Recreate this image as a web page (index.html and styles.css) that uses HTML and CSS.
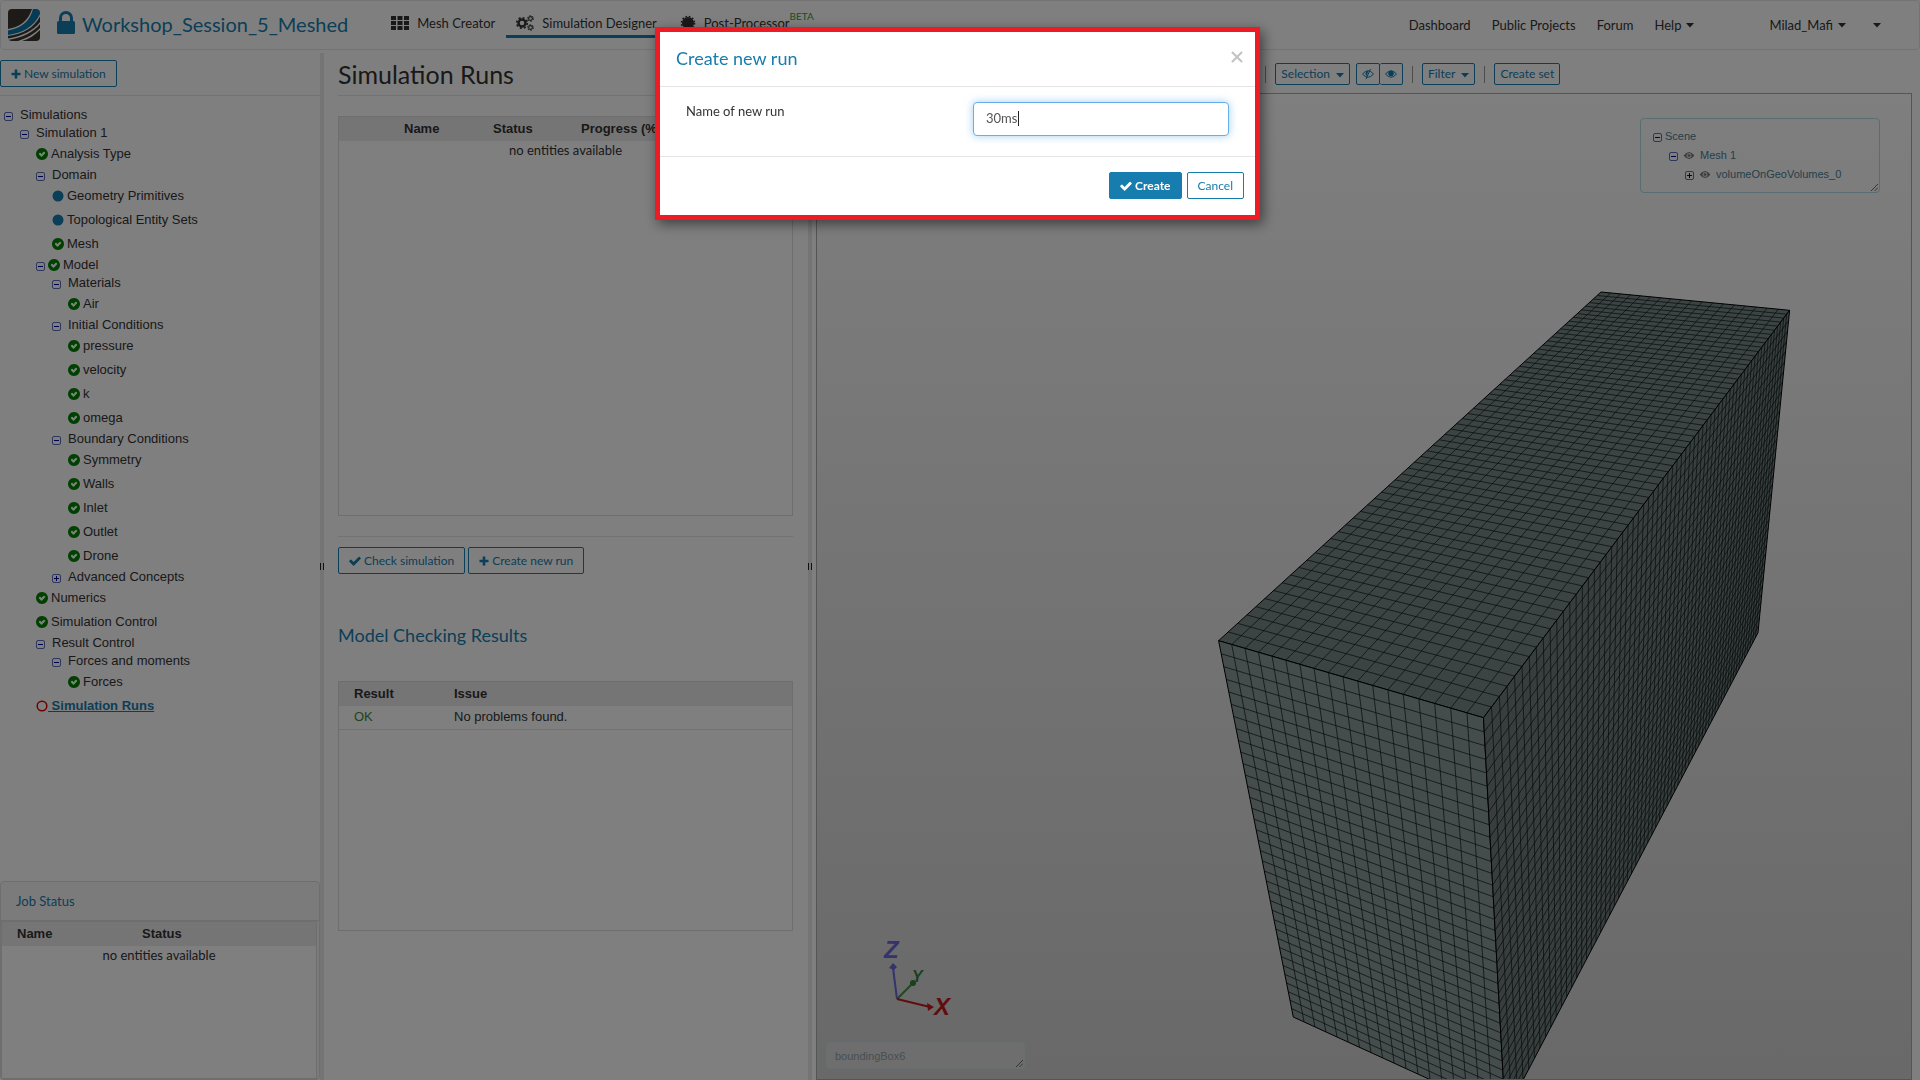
FILE: index.html
```html
<!DOCTYPE html>
<html lang="en">
<head>
<meta charset="utf-8">
<meta name="viewport" content="width=device-width, initial-scale=1">
<title>Workshop_Session_5_Meshed</title>
<link rel="stylesheet" href="styles.css">
</head>
<body>
<svg class="defs" aria-hidden="true">
  <symbol id="ok" viewBox="128 128 1536 1536"><path d="M1299 813l-422 422q-19 19-45 19t-45-19l-294-294q-19-19-19-45t19-45l102-102q19-19 45-19t45 19l147 147 275-275q19-19 45-19t45 19l102 102q19 19 19 45t-19 45zm365 83q0-209-103-385.500t-279.500-279.500-385.500-103-385.500 103-279.500 279.500-103 385.500 103 385.500 279.500 279.500 385.500 103 385.500-103 279.500-279.500 103-385.500z"/></symbol>
  <symbol id="check" viewBox="100 100 1600 1600"><path d="M1671 566q0 40-28 68l-724 724-136 136q-28 28-68 28t-68-28l-136-136-362-362q-28-28-28-68t28-68l136-136q28-28 68-28t68 28l294 295 656-657q28-28 68-28t68 28l136 136q28 28 28 68z"/></symbol>
  <symbol id="plus" viewBox="0 0 10 10"><path d="M3.700 0.500h2.600v3.200h3.200v2.600h-3.200v3.200h-2.600v-3.200h-3.200v-2.600h3.200z"/></symbol>
  <symbol id="minus-box" viewBox="0 0 9 9"><rect x=".5" y=".5" width="8" height="8" rx="1.500" fill="#fff" fill-opacity=".3" stroke="#5c6fae"/><path d="M2 4.500h5" stroke="#00009c"/></symbol>
  <symbol id="plus-box" viewBox="0 0 9 9"><rect x=".5" y=".5" width="8" height="8" rx="1.500" fill="#fff" fill-opacity=".3" stroke="#5c6fae"/><path d="M2 4.500h5M4.500 2v5" stroke="#00009c"/></symbol>
  <symbol id="dot" viewBox="0 0 12 12"><circle cx="6" cy="6" r="5.500"/></symbol>
  <symbol id="ring" viewBox="0 0 12 12"><circle cx="6" cy="6" r="4.800" fill="none" stroke="currentColor" stroke-width="1.500"/></symbol>
  <symbol id="eye" viewBox="0 0 12 10"><path d="M.5 5Q6-1.500 11.500 5Q6 11.500.5 5z" fill="none" stroke="currentColor"/><circle cx="6" cy="4.500" r="2.800"/></symbol>
  <symbol id="eye-off" viewBox="0 0 12 10"><path d="M.5 5Q6-1.500 11.500 5Q6 11.500.5 5zM8.500 0L4 10" fill="none" stroke="currentColor"/><path d="M6.500 1.700L4.500 7A3 3 0 0 1 6.500 1.700z"/></symbol>
  <symbol id="scene-eye" viewBox="0 0 12 10"><path d="M0 5Q6-3 12 5Q6 13 0 5z"/><circle cx="6" cy="5" r="2.800" fill="#ddd"/><circle cx="6" cy="5" r="1.500"/></symbol>
  <symbol id="caret" viewBox="0 0 8 5"><path d="M0 0h8L4 4.500z"/></symbol>
  <symbol id="grip" viewBox="0 0 8 8"><path d="M0 8L8 0M4 8L8 4" stroke="#555" stroke-width="1"/></symbol>
</svg>

<header class="navbar">
  <a class="logo" href="#" aria-label="Home">
    <svg viewBox="0 0 32 32" width="32" height="32">
      <defs><clipPath id="tile"><rect width="32" height="32" rx="4"/></clipPath></defs>
      <g clip-path="url(#tile)">
        <rect width="32" height="32" fill="#fff"/>
        <path d="M0 0H24C20 12 12 18 0 20z" fill="#3a352f"/>
        <path d="M25 0H32V5C26 18 14 24 0 26V21.500C14 19 22 12 25 0z" fill="#0a77a9"/>
        <path d="M32 7.500V13C25 22 14 27 0 29.500V27C15 25 26 19 32 7.500z" fill="#3a352f"/>
        <path d="M32 15V19C26 25 19 29 10 32H0V31C14 29 26 23 32 15z" fill="#3a352f"/>
        <path d="M32 21V32H14C21 30 27 26 32 21z" fill="#3a352f"/>
      </g>
    </svg>
  </a>
  <svg class="lock" viewBox="0 0 18 23" width="18" height="23"><path d="M3.500 11V7a5.500 5.500 0 0 1 11 0v4" fill="none" stroke="currentColor" stroke-width="3"/><rect y="10" width="18" height="13" rx="1.500" fill="currentColor"/></svg>
  <h1 class="project">Workshop_Session_5_Meshed</h1>
  <nav class="tabs" aria-label="Workspace">
    <a class="tab" href="#">
      <svg viewBox="0 0 18 14" width="18" height="14"><path d="M0 0h5v4H0zM6.500 0h5v4h-5zM13 0h5v4h-5zM0 5h5v4H0zM6.500 5h5v4h-5zM13 5h5v4h-5zM0 10h5v4H0zM6.500 10h5v4h-5zM13 10h5v4h-5z"/></svg>
      Mesh Creator</a>
    <a class="tab active" href="#">
      <svg viewBox="0 0 18 16" width="18" height="16" fill="none" stroke="currentColor">
        <g fill="none">
          <circle cx="6" cy="8" r="3.500" stroke-width="2.400"/><circle cx="6" cy="8" r="5.300" stroke-width="1.600" stroke-dasharray="2.080 2.080"/>
          <circle cx="14.500" cy="3.500" r="1.900" stroke-width="1.100"/><circle cx="14.500" cy="3.500" r="2.900" stroke-width="1" stroke-dasharray="1.520 1.520"/>
          <circle cx="14.500" cy="12.500" r="1.900" stroke-width="1.100"/><circle cx="14.500" cy="12.500" r="2.900" stroke-width="1" stroke-dasharray="1.520 1.520"/>
        </g>
      </svg>
      Simulation Designer</a>
    <a class="tab" href="#">
      <svg viewBox="0 0 16 16" width="16" height="16"><circle cx="8" cy="8" r="6"/><circle cx="8" cy="8" r="6.500" fill="none" stroke="currentColor" stroke-width="1.600" stroke-dasharray="1.700 1.700"/></svg>
      <span>Post-Processor<sup>BETA</sup></span></a>
  </nav>
  <nav class="account" aria-label="Account">
    <a href="#">Dashboard</a>
    <a href="#">Public Projects</a>
    <a href="#">Forum</a>
    <a href="#">Help <svg class="caret"><use href="#caret"/></svg></a>
    <a class="user" href="#">Milad_Mafi <svg class="caret"><use href="#caret"/></svg></a>
    <a class="more" href="#" aria-label="More"><svg class="caret"><use href="#caret"/></svg></a>
  </nav>
</header>

<main class="workspace">
  <aside class="sidebar">
    <div class="side-tools"><button class="btn" type="button"><svg class="plus"><use href="#plus"/></svg>New simulation</button></div>
    <ul class="tree">
      <li class="folder l0"><svg class="box"><use href="#minus-box"/></svg>Simulations</li>
      <li class="folder l1"><svg class="box"><use href="#minus-box"/></svg>Simulation 1</li>
      <li class="leaf l2"><svg class="ok"><use href="#ok"/></svg>Analysis Type</li>
      <li class="folder l2"><svg class="box"><use href="#minus-box"/></svg>Domain</li>
      <li class="leaf l3"><svg class="dot"><use href="#dot"/></svg>Geometry Primitives</li>
      <li class="leaf l3"><svg class="dot"><use href="#dot"/></svg>Topological Entity Sets</li>
      <li class="leaf l3"><svg class="ok"><use href="#ok"/></svg>Mesh</li>
      <li class="folder both l2"><svg class="box"><use href="#minus-box"/></svg><svg class="ok"><use href="#ok"/></svg>Model</li>
      <li class="folder l3"><svg class="box"><use href="#minus-box"/></svg>Materials</li>
      <li class="leaf l4"><svg class="ok"><use href="#ok"/></svg>Air</li>
      <li class="folder l3"><svg class="box"><use href="#minus-box"/></svg>Initial Conditions</li>
      <li class="leaf l4"><svg class="ok"><use href="#ok"/></svg>pressure</li>
      <li class="leaf l4"><svg class="ok"><use href="#ok"/></svg>velocity</li>
      <li class="leaf l4"><svg class="ok"><use href="#ok"/></svg>k</li>
      <li class="leaf l4"><svg class="ok"><use href="#ok"/></svg>omega</li>
      <li class="folder l3"><svg class="box"><use href="#minus-box"/></svg>Boundary Conditions</li>
      <li class="leaf l4"><svg class="ok"><use href="#ok"/></svg>Symmetry</li>
      <li class="leaf l4"><svg class="ok"><use href="#ok"/></svg>Walls</li>
      <li class="leaf l4"><svg class="ok"><use href="#ok"/></svg>Inlet</li>
      <li class="leaf l4"><svg class="ok"><use href="#ok"/></svg>Outlet</li>
      <li class="leaf l4"><svg class="ok"><use href="#ok"/></svg>Drone</li>
      <li class="folder l3"><svg class="box"><use href="#plus-box"/></svg>Advanced Concepts</li>
      <li class="leaf l2"><svg class="ok"><use href="#ok"/></svg>Numerics</li>
      <li class="leaf l2"><svg class="ok"><use href="#ok"/></svg>Simulation Control</li>
      <li class="folder l2"><svg class="box"><use href="#minus-box"/></svg>Result Control</li>
      <li class="folder l3"><svg class="box"><use href="#minus-box"/></svg>Forces and moments</li>
      <li class="leaf l4"><svg class="ok"><use href="#ok"/></svg>Forces</li>
      <li class="leaf l2"><svg class="ring"><use href="#ring"/></svg><a href="#">&nbsp;Simulation Runs</a></li>
    </ul>
    <section class="jobs">
      <h2>Job Status</h2>
      <div class="grid-box">
        <table>
          <thead><tr><th class="job-name">Name</th><th>Status</th></tr></thead>
          <tbody><tr><td class="empty" colspan="2">no entities available</td></tr></tbody>
        </table>
      </div>
    </section>
  </aside>

  <div class="splitter"><span></span></div>

  <section class="runs">
    <h2 class="page-title">Simulation Runs</h2>
    <div class="grid-box runs-box">
      <table>
        <thead><tr><th class="c-pick"></th><th class="c-name">Name</th><th class="c-status">Status</th><th>Progress (%)</th></tr></thead>
        <tbody><tr><td class="empty" colspan="4">no entities available</td></tr></tbody>
      </table>
    </div>
    <div class="actions">
      <button class="btn" type="button"><svg class="check"><use href="#check"/></svg>Check simulation</button>
      <button class="btn" type="button"><svg class="plus"><use href="#plus"/></svg>Create new run</button>
    </div>
    <h3 class="sub-title">Model Checking Results</h3>
    <div class="grid-box results-box">
      <table>
        <thead><tr><th class="c-result">Result</th><th>Issue</th></tr></thead>
        <tbody><tr class="ruled"><td class="c-result good">OK</td><td>No problems found.</td></tr></tbody>
      </table>
    </div>
  </section>

  <div class="splitter"><span></span></div>

  <section class="viewer">
    <div class="toolbar">
      <i class="sep"></i>
      <button class="btn small" type="button">Selection <svg class="caret"><use href="#caret"/></svg></button>
      <span class="pair">
        <button class="btn small" type="button" aria-label="Hide selection"><svg class="eye"><use href="#eye-off"/></svg></button>
        <button class="btn small" type="button" aria-label="Show all"><svg class="eye"><use href="#eye"/></svg></button>
      </span>
      <i class="sep"></i>
      <button class="btn small" type="button">Filter <svg class="caret"><use href="#caret"/></svg></button>
      <i class="sep"></i>
      <button class="btn small" type="button">Create set</button>
    </div>
    <div class="canvas">
      <svg class="mesh" id="mesh" viewBox="817 94 1094 985" preserveAspectRatio="xMaxYMin meet" aria-label="Mesh 1"></svg>
      <svg class="axes" viewBox="0 0 80 90" width="80" height="90">
        <g stroke-width="2" fill="none"><path d="M17 69L13 38" stroke="#6a66d8"/><path d="M17 69L33 53" stroke="#3f8f45"/><path d="M17 69L50 77" stroke="#c21a20"/></g>
        <path d="M9 38l4-5 4 4-3 3z" fill="#6a66d8"/><circle cx="33" cy="53" r="3" fill="#35803a"/><path d="M47 73l7 4-6 4z" fill="#c21a20"/>
        <text class="ax-z" x="4" y="28">Z</text><text class="ax-y" x="32" y="52">Y</text><text class="ax-x" x="54" y="85">X</text>
      </svg>
      <div class="scene">
        <ul>
          <li><svg class="box"><use href="#minus-box"/></svg>Scene</li>
          <li class="s1"><svg class="box"><use href="#minus-box"/></svg><svg class="seye"><use href="#scene-eye"/></svg>Mesh 1</li>
          <li class="s2"><svg class="box"><use href="#plus-box"/></svg><svg class="seye"><use href="#scene-eye"/></svg>volumeOnGeoVolumes_0</li>
        </ul>
        <svg class="grip"><use href="#grip"/></svg>
      </div>
      <div class="picked">boundingBox6<svg class="grip"><use href="#grip"/></svg></div>
    </div>
  </section>
</main>

<div class="backdrop">
  <form class="modal" role="dialog" aria-labelledby="modal-title">
    <div class="modal-head">
      <h2 id="modal-title">Create new run</h2>
      <button class="close" type="button" aria-label="Close"><svg viewBox="0 0 12 12" width="12" height="12"><path d="M1 1l10 10M11 1l-10 10" stroke="currentColor" stroke-width="2.200"/></svg></button>
    </div>
    <div class="modal-body">
      <label for="run-name">Name of new run</label>
      <div class="field"><input id="run-name" type="text" value="30ms"><span class="cursor"></span></div>
    </div>
    <div class="modal-foot">
      <button class="btn primary" type="button"><svg class="check"><use href="#check"/></svg>Create</button>
      <button class="btn" type="button">Cancel</button>
    </div>
  </form>
</div>
<script src="mesh.js"></script>
</body>
</html>
```
FILE: styles.css
```css
* { box-sizing: border-box; }
body { margin: 0; height: 100vh; display: flex; flex-direction: column; background: #fff; color: #333; font: 13px/18px Lato, sans-serif; overflow: hidden; }
h1, h2, h3, ul { margin: 0; padding: 0; font-weight: 400; list-style: none; }
a { color: inherit; text-decoration: none; }
svg { flex: none; fill: currentColor; }
.defs { position: absolute; width: 0; height: 0; }

.navbar { display: flex; align-items: center; height: 50px; flex: none; border: 1px solid #e7e7e7; border-radius: 4px; padding: 0 38px 0 7px; }
.logo { display: flex; margin-right: 17px; }
.lock { color: #177cae; margin: 0 7px 6px 0; }
.project { color: #177cae; font-size: 20px; line-height: 28px; padding-bottom: 2px; }
.tabs { display: flex; gap: 11px; margin-left: 31px; align-self: stretch; align-items: flex-start; }
.tab { display: flex; align-items: center; gap: 8px; height: 37px; padding: 9px 0 0 12px; border-bottom: 3px solid transparent; }
.tab.active { border-color: #177cae; padding-left: 10px; }
.tab sup { color: #3a9a3a; font-size: 10px; line-height: 0; vertical-align: 8px; }
.account { display: flex; gap: 21px; margin-left: auto; padding-bottom: 1px; }
.account a { display: flex; align-items: center; gap: 5px; }
.account .user { margin-left: 54px; }
.account .more { margin-left: 6px; }
.caret { width: 8px; height: 5px; margin-top: 2px; }

.workspace { flex: 1; min-height: 0; display: grid; grid-template-columns: 320px 4px 484px 4px 1fr; padding-top: 3px; }
.splitter { background: #e8e8e8; display: flex; align-items: center; justify-content: center; }
.splitter span { width: 4px; height: 7px; border: solid #222; border-width: 0 1px; }

.btn { display: inline-flex; align-items: center; justify-content: center; gap: 3px; height: 27px; padding: 0 10px; border: 1px solid #177cae; border-radius: 2px; background: none; color: #177cae; font: 12px/16px Lato, sans-serif; white-space: nowrap; }
.btn.small { height: 22px; padding: 0 5px; gap: 6px; }
.btn.primary { background: #177cae; color: #fff; font-weight: 700; }
.plus { width: 10px; height: 10px; }
.check { width: 12px; height: 12px; }

.sidebar { display: flex; flex-direction: column; min-height: 0; }
.side-tools { height: 43px; padding-top: 7px; border-bottom: 1px solid #e5e5e5; }
.tree { flex: 1; padding-top: 10px; font: 13px/18px "Liberation Sans", Arial, sans-serif; white-space: nowrap; overflow: hidden; }
.tree li { display: flex; align-items: center; height: 18px; gap: 7px; }
.tree .leaf { height: 24px; gap: 3px; }
.tree .both { gap: 3px; }
.tree .l0 { padding-left: 4px; }
.tree .l1 { padding-left: 20px; }
.tree .l2 { padding-left: 36px; }
.tree .l3 { padding-left: 52px; }
.tree .l4 { padding-left: 68px; }
.tree a { color: #177cae; font-weight: 700; text-decoration: underline; margin-left: -3px; }
.box { width: 9px; height: 9px; margin-top: 2px; }
.ok { width: 12px; height: 12px; color: #008000; }
.dot { width: 12px; height: 12px; color: #177cae; }
.ring { width: 12px; height: 12px; color: #e00000; }

.jobs { display: flex; flex-direction: column; height: 199px; border: 1px solid #ddd; border-radius: 4px; background: #f7f7f7; }
.jobs h2 { height: 39px; padding: 10px 15px; font-size: 13px; line-height: 18px; color: #177cae; border-bottom: 1px solid #ddd; }
.jobs .grid-box { flex: 1; margin-right: 2px; }

.grid-box { border: 1px solid #ddd; background: #fff; }
table { width: 100%; border-collapse: collapse; font: 13px/18px "Liberation Sans", Arial, sans-serif; table-layout: fixed; }
th { height: 24px; padding: 0 0 0 15px; text-align: left; background: #ebebeb; }
td { height: 23px; padding: 0 0 0 15px; }
.ruled { border-bottom: 1px solid #e5e5e5; }
td.empty { height: 18px; padding: 0; text-align: center; font-family: Lato, sans-serif; }
.job-name { width: 125px; }

.runs { padding: 0 15px 0 14px; }
.page-title { height: 43px; padding-top: 5px; font-size: 25px; line-height: 32px; border-bottom: 1px solid #e5e5e5; }
.runs-box { height: 400px; margin-top: 20px; }
.runs th { padding-left: 0; }
.runs .c-pick { width: 65px; }
.runs .c-name { width: 89px; }
.runs .c-status { width: 88px; }
.runs .c-result { width: 115px; padding-left: 15px; }
.runs .results-box td:last-child { padding-left: 0; }
.good { color: #3c8a3c; }
.actions { display: flex; gap: 3px; margin-top: 20px; padding-top: 10px; border-top: 1px solid #e5e5e5; }
.sub-title { margin-top: 49px; font-size: 18px; line-height: 24px; color: #177cae; }
.results-box { height: 250px; margin-top: 34px; }

.viewer { display: flex; flex-direction: column; padding: 0 8px 0 4px; min-width: 0; }
.toolbar { display: flex; align-items: center; gap: 9px; height: 40px; padding: 2px 0 0 41%; }
.sep { width: 1px; height: 17px; background: #999; }
.pair { display: flex; margin-left: -3px; }
.pair .btn + .btn { border-left: 0; }
.eye { width: 12px; height: 10px; }
.canvas { position: relative; flex: 1; min-height: 0; border: 1px solid #aaa; background: linear-gradient(#fefefe, #d2d2d2); overflow: hidden; }
.mesh { display: block; width: 100%; height: 100%; }
.mesh polygon { stroke: #000; stroke-width: 1; }
.mesh path { fill: none; stroke: #0c1414; stroke-width: 1; stroke-opacity: .7; }
.mesh .top { fill: #788686; }
.mesh .front { fill: #8a9899; }
.mesh .side { fill: #6f7d7b; }
.axes { position: absolute; left: 63px; bottom: 59px; }
.axes text { font: italic 700 24px "Liberation Sans", Arial, sans-serif; }
.ax-z { fill: #6a66d8; }
.axes .ax-y { fill: #35803a; font-size: 16px; }
.ax-x { fill: #c21a20; }
.scene { position: absolute; top: 24px; right: 31px; width: 240px; height: 75px; padding: 8px 12px; border: 1px solid #b4dbe5; border-radius: 4px; font: 11px/19px "Liberation Sans", Arial, sans-serif; color: #4a7f93; }
.scene li { display: flex; align-items: center; gap: 3px; }
.scene .s1 { padding-left: 16px; gap: 5px; }
.scene .s2 { padding-left: 32px; gap: 5px; }
.seye { width: 12px; height: 9px; color: #777; }
.grip { position: absolute; right: 1px; bottom: 1px; width: 7px; height: 7px; }
.picked { position: absolute; left: 9px; bottom: 10px; width: 199px; height: 27px; padding: 4px 8px; border: 1px solid #d3dde2; border-radius: 4px; background: #dcdcdc; font: 11px/18px "Liberation Sans", Arial, sans-serif; color: #8fa0a5; }

.backdrop { position: fixed; inset: 0; display: flex; align-items: flex-start; justify-content: center; background: rgba(0, 0, 0, .5); padding-top: 27px; }
.modal { width: 605px; margin-right: 5px; border: 5px solid #ed1c24; background: #fff; box-shadow: 3px 4px 12px rgba(0, 0, 0, .5); }
.modal-head { display: flex; justify-content: space-between; height: 55px; padding: 14px 12px 0 16px; border-bottom: 1px solid #e5e5e5; }
.modal-head h2 { font-size: 18px; line-height: 24px; color: #177cae; }
.close { height: 24px; padding: 0; border: 0; background: none; color: #c4c4c4; }
.modal-body { display: flex; justify-content: space-between; height: 70px; padding: 15px 26px 0 26px; border-bottom: 1px solid #e5e5e5; }
.field { position: relative; width: 256px; }
.field input { width: 100%; height: 34px; padding: 0 12px 2px; border: 1px solid #66afe9; border-radius: 4px; outline: 0; color: #555; font: 13px/20px Lato, sans-serif; box-shadow: 0 0 8px rgba(102, 175, 233, .6); }
.cursor { position: absolute; left: 45px; top: 9px; width: 1px; height: 15px; background: #222; }
.modal-foot { display: flex; justify-content: flex-end; gap: 5px; padding: 15px 11px 16px; }
```
FILE: mesh.js
```js
// Draws a structured hexahedral block: each visible face is a projected unit
// square, subdivided into cells.
const NS = 'http://www.w3.org/2000/svg';
const mesh = document.getElementById('mesh');
const A = [1601, 292], B = [1789.6, 310.3], C = [1218.6, 640.7], D = [1483.5, 717.7];
const E = [1758, 632.7], F = [1293.3, 1017], G = [1505.2, 1114];

function projector(p00, p10, p11, p01) {
  const ax = p10[0] - p11[0], ay = p10[1] - p11[1];
  const bx = p01[0] - p11[0], by = p01[1] - p11[1];
  const sx = p00[0] - p10[0] + p11[0] - p01[0];
  const sy = p00[1] - p10[1] + p11[1] - p01[1];
  const det = ax * by - bx * ay;
  const g = (sx * by - bx * sy) / det, h = (ax * sy - sx * ay) / det;
  return (u, v) => [0, 1].map(i =>
    ((((1 + g) * p10[i] - p00[i]) * u + ((1 + h) * p01[i] - p00[i]) * v + p00[i]) /
    (g * u + h * v + 1)).toFixed(2)).join(' ');
}

function face(name, corners, nu, nv) {
  const at = projector(...corners);
  const poly = document.createElementNS(NS, 'polygon');
  poly.setAttribute('class', name);
  poly.setAttribute('points', corners.join(' '));
  let d = '';
  for (let i = 1; i < nu; i++) d += `M${at(i / nu, 0)}L${at(i / nu, 1)}`;
  for (let j = 1; j < nv; j++) d += `M${at(0, j / nv)}L${at(1, j / nv)}`;
  const lines = document.createElementNS(NS, 'path');
  lines.setAttribute('d', d);
  mesh.append(poly, lines);
}

face('top', [C, D, B, A], 18, 63);
face('front', [C, D, G, F], 18, 36);
face('side', [D, B, E, G], 63, 36);
```
